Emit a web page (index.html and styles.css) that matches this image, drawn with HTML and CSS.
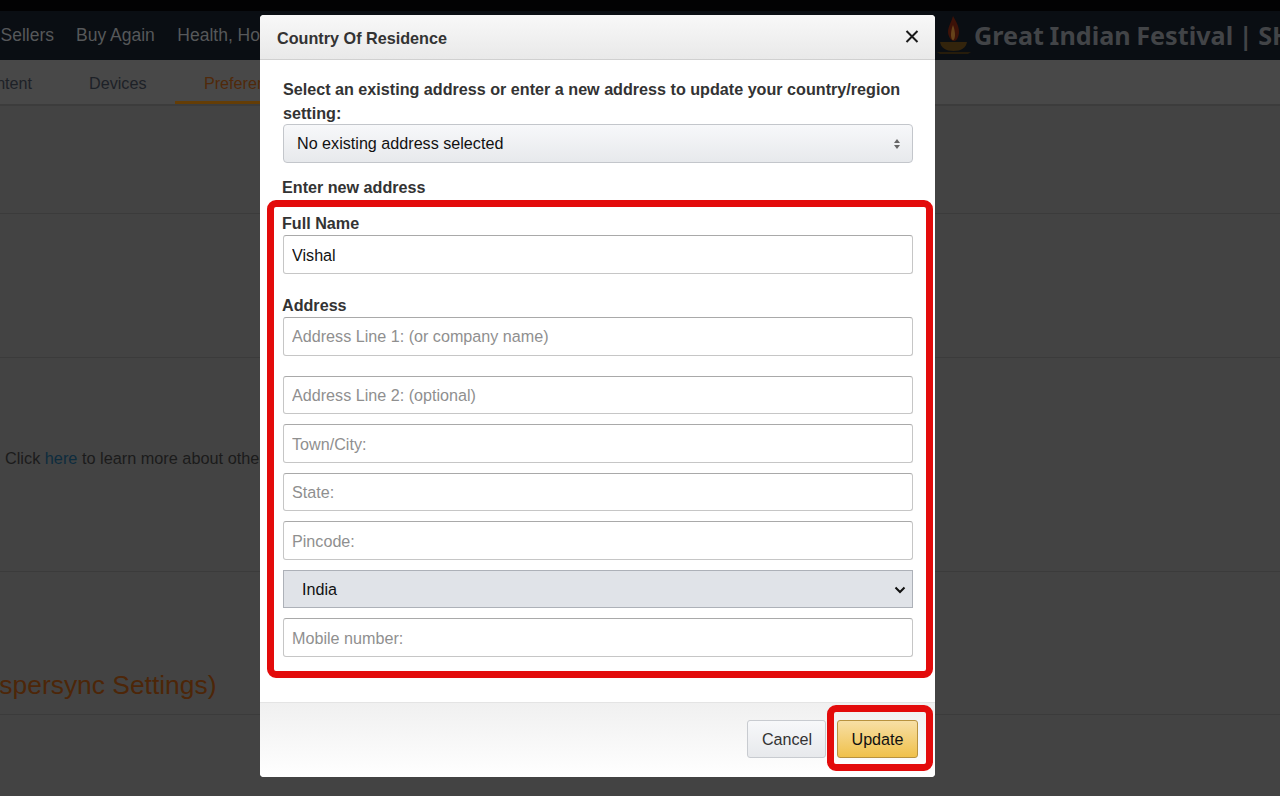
FILE: index.html
```html
<!DOCTYPE html>
<html lang="en">
<head>
<meta charset="utf-8">
<title>Country Of Residence</title>
<link rel="stylesheet" href="styles.css">
</head>
<body>
<div class="page">
  <div class="topstrip"></div>
  <nav class="mainnav">
    <a class="nav-sellers">Sellers</a>
    <a class="nav-buy">Buy Again</a>
    <a class="nav-health">Health, Household</a>
    <div class="promo">
      <svg class="lamp" width="36" height="40" viewBox="0 0 36 40" aria-hidden="true">
        <path d="M17 0c4 7 6 11 6 16 0 4-2 9-5 9s-6-5-6-9c0-5 3-9 5-16z" fill="#3d1208"/>
        <path d="M17 9c1.500 4 2 7 2 10s-1 5-2 5-2-2-2-5 .5-6 2-10z" fill="#66431a"/>
        <path d="M4 26h27c-1 6-6 9-13.500 9S5 32 4 26z" fill="#33240c"/>
        <path d="M1 36h34l-3 2H4z" fill="#261c0b"/>
      </svg>
      <span class="promo-text">Great Indian Festival | SHOP NOW</span>
    </div>
  </nav>
  <nav class="subnav">
    <a class="tab tab-content">Content</a>
    <a class="tab tab-devices">Devices</a>
    <a class="tab tab-active">Preferences</a>
  </nav>
  <section class="row row-a"></section>
  <section class="row row-b"></section>
  <section class="row row-c"><p class="learn">Click <a>here</a> to learn more about other settings</p></section>
  <section class="row row-d"><h2 class="sync">Device Synchronization (Whispersync Settings)</h2></section>
</div>

<div class="modal" role="dialog" aria-label="Country Of Residence">
  <header class="modal-head">
    <h1>Country Of Residence</h1>
    <svg class="close" width="14" height="13" viewBox="0 0 14 13" aria-hidden="true"><path d="M1.500 1l11 11M12.500 1l-11 11" stroke="#1a1a1a" stroke-width="2" fill="none"/></svg>
  </header>
  <div class="modal-body">
    <p class="intro">Select an existing address or enter a new address to update your country/region setting:</p>
    <div class="fake-select">
      <span>No existing address selected</span>
      <svg width="8" height="12" viewBox="0 0 8 12" aria-hidden="true"><path d="M4 1l3 4H1zM4 11L1 7h6z" fill="#666"/></svg>
    </div>
    <div class="label label-new">Enter new address</div>
    <label class="label label-name" for="fullname">Full Name</label>
    <input class="field field-tall field-name" id="fullname" value="Vishal">
    <label class="label label-addr" for="line1">Address</label>
    <input class="field field-tall" id="line1" placeholder="Address Line 1: (or company name)">
    <div class="stack">
      <input class="field" placeholder="Address Line 2: (optional)">
      <input class="field" placeholder="Town/City:">
      <input class="field" placeholder="State:">
      <input class="field" placeholder="Pincode:">
      <div class="country">
        <span>India</span>
        <svg width="12" height="8" viewBox="0 0 12 8" aria-hidden="true"><path d="M1.500 1.500L6 6l4.500-4.500" stroke="#111" stroke-width="2" fill="none"/></svg>
      </div>
      <input class="field" placeholder="Mobile number:">
    </div>
  </div>
  <footer class="modal-foot">
    <button class="btn btn-cancel" type="button">Cancel</button>
    <button class="btn btn-update" type="button">Update</button>
  </footer>
  <div class="mark mark-form"></div>
  <div class="mark mark-update"></div>
</div>
</body>
</html>
```

FILE: styles.css
```css
* { box-sizing: border-box; }
html, body { margin: 0; height: 796px; overflow: hidden; }
body { font-family: "Liberation Sans", Arial, sans-serif; background: #434343; color: #333; }

.page { height: 796px; overflow: hidden; }
.topstrip { height: 11px; background: #020203; }
.mainnav { height: 49px; background: #0a0e13; display: flex; align-items: center; color: #56585a; font-size: 17.5px; white-space: nowrap; position: relative; }
.nav-sellers { margin-left: .5px; }
.nav-buy { margin-left: 22px; }
.nav-health { margin-left: 22.5px; }
.promo { margin-left: auto; display: flex; align-items: center; width: 344px; flex: none; overflow: hidden; }
.lamp { flex: none; }
.promo-text { font-family: "Noto Sans", sans-serif; font-weight: 700; font-size: 25.2px; word-spacing: -1px; color: #424447; margin: 0 0 2px 2px; }

.subnav { height: 46px; background: #484848; border-bottom: 2px solid #3c3c3c; display: flex; font-size: 16.15px; color: #1d2127; white-space: nowrap; }
.tab { display: block; line-height: 47px; height: 44px; }
.tab-content { margin-left: -24.5px; }
.tab-devices { margin-left: 57px; }
.tab-active { margin-left: 28.5px; padding: 0 29px; color: #50290a; border-bottom: 3px solid #643d06; height: 44px; }

.row { border-bottom: 1px solid #3b3b3b; }
.row-a { height: 108px; }
.row-b { height: 144px; }
.row-c { height: 214px; padding-top: 88px; }
.row-d { height: 143px; padding-top: 97px; }
.learn { margin: 0; padding-left: 5px; font-size: 16.3px; line-height: 24px; color: #1b1b1b; white-space: nowrap; }
.learn a { color: #0d2c3e; }
.sync { margin: 0; font-weight: 400; font-size: 26.4px; line-height: 32px; color: #4d2608; white-space: nowrap; transform: translateX(-338px); }

.modal { position: absolute; left: 260px; top: 15px; width: 675px; height: 762px; background: #fff; border-radius: 4px; display: flex; flex-direction: column; overflow: hidden; }
.modal-head { height: 45px; flex: none; display: flex; align-items: center; justify-content: space-between; padding: 0 16px 2px 17px; background: linear-gradient(#f8f8f8, #e9e9e9); border-bottom: 1px solid #d0d0d0; }
.modal-head h1 { margin: 4px 0 0; font-size: 16.2px; font-weight: 700; color: #333; }

.modal-body { flex: 1; padding: 17px 22px 0 23px; font-size: 16.15px; }
.intro { margin: 0; font-weight: 700; line-height: 24px; color: #333; }
.fake-select { height: 39px; margin-top: -1px; padding: 0 11px 0 13px; display: flex; align-items: center; justify-content: space-between; border: 1px solid #c3c6cb; border-radius: 4px; background: linear-gradient(#f7f8fa, #e7e9ec); color: #111; }
.label { display: block; font-weight: 700; line-height: 23px; padding-top: 1px; color: #333; margin-left: -1px; }
.label-new { margin-top: 12px; }
.label-name { margin-top: 12px; }
.label-addr { margin-top: 19px; }
.field { display: block; width: 100%; height: 38.5px; padding: 1px 8px 0; font: 16.15px "Liberation Sans", Arial, sans-serif; color: #111; background: #fff; border: 1px solid #c6c6c6; border-top-color: #a9a9a9; border-radius: 3px; outline: 0; }
.field-tall { height: 39px; padding-top: 0; }
.field-name { padding-top: 2px; }
.field::placeholder { color: #8f8f8f; opacity: 1; }
.stack { display: grid; gap: 10px; margin-top: 19.75px; }
.country { height: 38.5px; padding: 1px 6px 0 18px; display: flex; align-items: center; justify-content: space-between; background: #e0e3e8; border: 1px solid #adb1b8; color: #111; }
.modal-foot { height: 75px; flex: none; display: flex; justify-content: flex-end; align-items: flex-start; gap: 11px; padding: 17px 17px 0 0; background: linear-gradient(#f0f0f0, #fff); border-top: 1px solid #e4e4e4; }
.btn { height: 38px; font: 16.15px "Liberation Sans", Arial, sans-serif; border-radius: 3px; color: #111; padding: 0; }
.btn-cancel { width: 79px; border: 1px solid #c8cbd0; background: linear-gradient(#f7f8fa, #e7e9ec); color: #333; padding-left: 1px; }
.btn-update { width: 81px; border: 1px solid #b8923e; background: linear-gradient(#f7dfa5, #f0c14b); }

.mark { position: absolute; border: 7px solid #e30b0b; border-radius: 9px; pointer-events: none; }
.mark-form { left: 7px; top: 185px; width: 666px; height: 478px; }
.mark-update { left: 567px; top: 690px; width: 106px; height: 66px; }
```
